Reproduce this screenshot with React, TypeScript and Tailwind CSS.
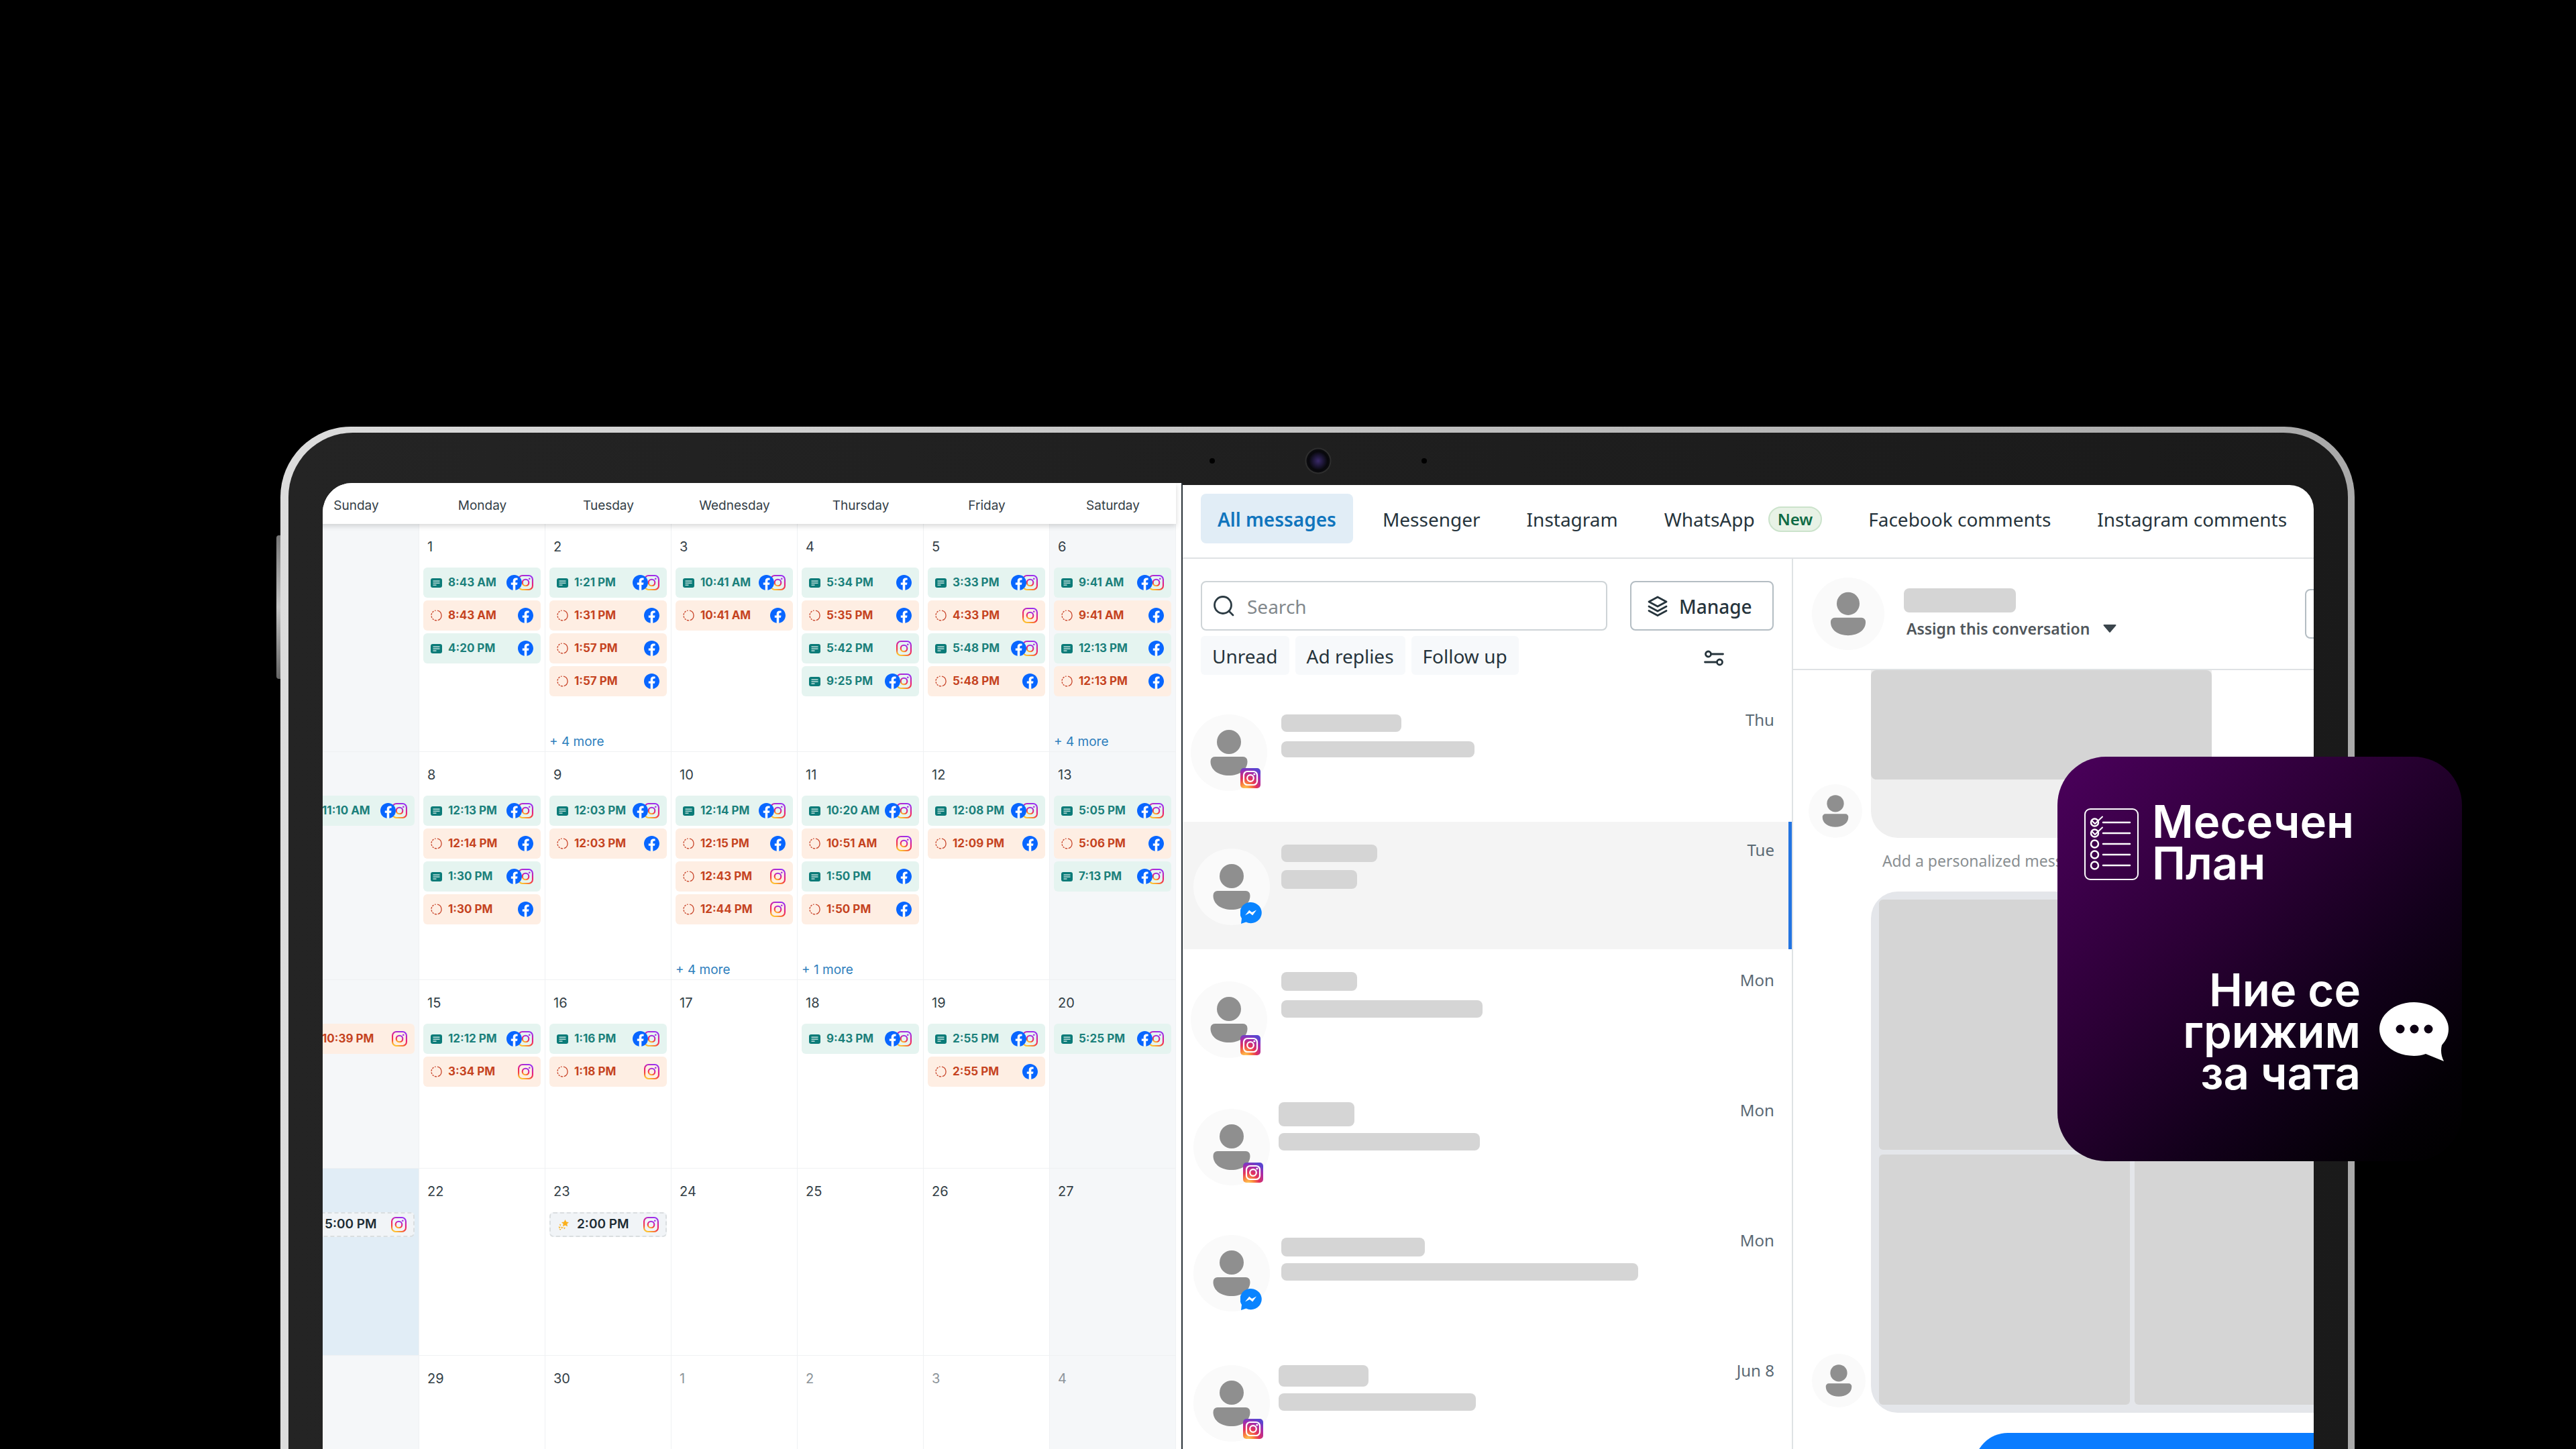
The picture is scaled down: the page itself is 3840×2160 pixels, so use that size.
import clsx from "clsx";

type Post = {
  time: string;
  kind: "published" | "failed" | "suggested";
  fb?: boolean;
  ig?: boolean;
};

type Day = {
  label: string;
  posts?: Post[];
  more?: number;
  muted?: boolean;
  today?: boolean;
};

// Short helpers so the month below stays readable
const ok = (time: string, on: string): Post => ({
  time,
  kind: "published",
  fb: on.includes("f"),
  ig: on.includes("i"),
});
const bad = (time: string, on: string): Post => ({ ...ok(time, on), kind: "failed" });
const tip = (time: string): Post => ({ time, kind: "suggested", ig: true });

const weekdays = ["Sunday", "Monday", "Tuesday", "Wednesday", "Thursday", "Friday", "Saturday"];

const weeks: { height: string; days: Day[] }[] = [
  {
    height: "h-[339px]",
    days: [
      { label: "" },
      { label: "1", posts: [ok("8:43 AM", "fi"), bad("8:43 AM", "f"), ok("4:20 PM", "f")] },
      {
        label: "2",
        posts: [ok("1:21 PM", "fi"), bad("1:31 PM", "f"), bad("1:57 PM", "f"), bad("1:57 PM", "f")],
        more: 4,
      },
      { label: "3", posts: [ok("10:41 AM", "fi"), bad("10:41 AM", "f")] },
      {
        label: "4",
        posts: [ok("5:34 PM", "f"), bad("5:35 PM", "f"), ok("5:42 PM", "i"), ok("9:25 PM", "fi")],
      },
      {
        label: "5",
        posts: [ok("3:33 PM", "fi"), bad("4:33 PM", "i"), ok("5:48 PM", "fi"), bad("5:48 PM", "f")],
      },
      {
        label: "6",
        posts: [ok("9:41 AM", "fi"), bad("9:41 AM", "f"), ok("12:13 PM", "f"), bad("12:13 PM", "f")],
        more: 4,
      },
    ],
  },
  {
    height: "h-[339px]",
    days: [
      { label: "", posts: [ok("11:10 AM", "fi")] },
      {
        label: "8",
        posts: [ok("12:13 PM", "fi"), bad("12:14 PM", "f"), ok("1:30 PM", "fi"), bad("1:30 PM", "f")],
      },
      { label: "9", posts: [ok("12:03 PM", "fi"), bad("12:03 PM", "f")] },
      {
        label: "10",
        posts: [ok("12:14 PM", "fi"), bad("12:15 PM", "f"), bad("12:43 PM", "i"), bad("12:44 PM", "i")],
        more: 4,
      },
      {
        label: "11",
        posts: [ok("10:20 AM", "fi"), bad("10:51 AM", "i"), ok("1:50 PM", "f"), bad("1:50 PM", "f")],
        more: 1,
      },
      { label: "12", posts: [ok("12:08 PM", "fi"), bad("12:09 PM", "f")] },
      { label: "13", posts: [ok("5:05 PM", "fi"), bad("5:06 PM", "f"), ok("7:13 PM", "fi")] },
    ],
  },
  {
    height: "h-[280px]",
    days: [
      { label: "", posts: [bad("10:39 PM", "i")] },
      { label: "15", posts: [ok("12:12 PM", "fi"), bad("3:34 PM", "i")] },
      { label: "16", posts: [ok("1:16 PM", "fi"), bad("1:18 PM", "i")] },
      { label: "17" },
      { label: "18", posts: [ok("9:43 PM", "fi")] },
      { label: "19", posts: [ok("2:55 PM", "fi"), bad("2:55 PM", "f")] },
      { label: "20", posts: [ok("5:25 PM", "fi")] },
    ],
  },
  {
    height: "h-[278px]",
    days: [
      { label: "", posts: [tip("5:00 PM")], today: true },
      { label: "22" },
      { label: "23", posts: [tip("2:00 PM")] },
      { label: "24" },
      { label: "25" },
      { label: "26" },
      { label: "27" },
    ],
  },
  {
    height: "h-[278px]",
    days: [
      { label: "" },
      { label: "29" },
      { label: "30" },
      { label: "1", muted: true },
      { label: "2", muted: true },
      { label: "3", muted: true },
      { label: "4", muted: true },
    ],
  },
];

const conversations = [
  { date: "Thu", from: "ig", avatar: "mt-[34px] ml-3", bars: "pt-[34px] gap-3.5", name: "h-[26px] w-[179px]", text: "h-6 w-72" },
  { date: "Tue", from: "ms", avatar: "mt-10 ml-4", bars: "pt-[34px] gap-3", name: "h-[26px] w-[143px]", text: "h-7 w-[113px]", active: true },
  { date: "Mon", from: "ig", avatar: "mt-11 ml-3", bars: "pt-[30px] gap-3.5", name: "h-7 w-[113px]", text: "h-[26px] w-[300px]" },
  { date: "Mon", from: "ig", avatar: "mt-10 ml-4", bars: "-ml-1 pt-[30px] gap-2.5", name: "h-9 w-[113px]", text: "h-[26px] w-[300px]" },
  { date: "Mon", from: "ms", avatar: "mt-[34px] ml-4", bars: "pt-[38px] gap-2.5", name: "h-7 w-[214px]", text: "h-[26px] w-[532px]" },
  { date: "Jun 8", from: "ig", avatar: "mt-[34px] ml-4", bars: "-ml-1 pt-[34px] gap-2.5", name: "h-8 w-[134px]", text: "h-[26px] w-[294px]" },
];

/* ---------- Icons ---------- */

const Gradients = () => (
  <svg width="0" height="0" className="absolute" aria-hidden="true">
    <defs>
      <linearGradient id="ig-line" x1="0.7" y1="0" x2="0.3" y2="1">
        <stop offset="0" stopColor="#9a2ff0" />
        <stop offset="0.45" stopColor="#e8207c" />
        <stop offset="0.75" stopColor="#f4453a" />
        <stop offset="1" stopColor="#fdc02f" />
      </linearGradient>
      <radialGradient id="ig-fill" cx="0.25" cy="1.05" r="1.1">
        <stop offset="0" stopColor="#ffd35c" />
        <stop offset="0.25" stopColor="#fb8a3c" />
        <stop offset="0.5" stopColor="#e4325a" />
        <stop offset="0.8" stopColor="#a32cae" />
        <stop offset="1" stopColor="#5b45d0" />
      </radialGradient>
      <radialGradient id="lens">
        <stop offset="0" stopColor="#3a2a6a" />
        <stop offset="0.45" stopColor="#1b1533" />
        <stop offset="0.75" stopColor="#08080c" />
        <stop offset="1" stopColor="#0d0d10" />
      </radialGradient>
    </defs>
  </svg>
);

const FacebookIcon = () => (
  <svg viewBox="8 8 496 496" className="relative z-10 size-[23px]">
    <circle cx="256" cy="256" r="235" fill="#fff" />
    <path
      fill="#0866ff"
      d="M504 256C504 119 393 8 256 8S8 119 8 256c0 123.78 90.69 226.38 209.25 245V327.69h-63V256h63v-54.64c0-62.15 37-96.48 93.67-96.48 27.14 0 55.52 4.84 55.52 4.84v61h-31.28c-30.8 0-40.41 19.12-40.41 38.73V256h68.78l-11 71.69h-57.78V501C413.31 482.38 504 379.78 504 256z"
    />
  </svg>
);

const InstagramIcon = () => (
  <svg viewBox="0 0 24 24" className="size-[23px]" fill="none" stroke="url(#ig-line)" strokeWidth="2.2">
    <rect x="1.1" y="1.1" width="21.8" height="21.8" rx="6" />
    <circle cx="12" cy="12" r="5" />
    <circle cx="18" cy="6" r="1.4" fill="#a72fe0" stroke="none" />
  </svg>
);

const PostIcon = () => (
  <svg viewBox="0 0 17 14" className="h-3.5 w-[17px]">
    <rect width="17" height="14" rx="3" fill="#0b7b78" />
    <path d="M3.5 4.2h10M3.5 7.2h10M3.5 10.2h5" stroke="#e5f4f0" strokeWidth="1.3" />
  </svg>
);

const FailedIcon = () => (
  <svg viewBox="0 0 17 17" className="size-[17px]" fill="none" stroke="#c8452a" strokeWidth="1.3">
    <path d="M10 1.1a7.5 7.5 0 0 1 .8 14.5M9.2 15.9a7.5 7.5 0 0 1-3.4-.5M4.6 14.8a7.5 7.5 0 0 1-1.9-1.7M2 12a7.5 7.5 0 0 1-.9-2.7M1 7.8a7.5 7.5 0 0 1 .8-2.7M2.5 4a7.5 7.5 0 0 1 2-1.9M6 1.4a7.5 7.5 0 0 1 1.6-.3" />
  </svg>
);

const StarIcon = () => (
  <svg viewBox="0 0 16 16" className="size-4" fill="#fbb01b">
    <path d="M10.5 0l1.8 3.4 3.7.5-2.7 2.6.7 3.8-3.5-1.8L7 10.3l.7-3.8L5 3.9l3.7-.5z" />
    <path d="M2 6.5l2.5 1.2-1.5 2zM.5 10.5l3.5.5-2.3 2zM4.5 10.5l3 1.2-2.3 2zM8 11.5l3 .8-2 2.2zM1.5 13.5l3 .7-1.5 1.8z" />
  </svg>
);

const ChannelBadge = ({ from }: { from: string }) =>
  from === "ig" ? (
    <svg viewBox="0 0 30 30" className="absolute right-2.5 bottom-1 size-[30px]">
      <rect width="30" height="30" rx="5" fill="url(#ig-fill)" />
      <g fill="none" stroke="#fff" strokeWidth="2.2">
        <rect x="5" y="5" width="20" height="20" rx="5.5" />
        <circle cx="15" cy="15" r="4.8" />
      </g>
      <circle cx="20.8" cy="9.2" r="1.4" fill="#fff" />
    </svg>
  ) : (
    <svg viewBox="0 0 32 32" className="absolute right-3 bottom-0.5 size-8">
      <path fill="#0a84ff" d="M16 0a16 15.6 0 1 1-7.5 29.5L1 32l1-8A15.6 15.6 0 0 1 16 0z" />
      <path fill="#fff" d="M7 19.5l6.2-7.8 4 3.2 6.8-3.4-5.8 8-4.4-3.4z" />
    </svg>
  );

const Person = ({ size }: { size: string }) => (
  <svg viewBox="0 0 114 114" className={clsx("block shrink-0", size)}>
    <circle cx="57" cy="57" r="57" fill="#fafafa" />
    <g fill="#8f8f8f">
      <circle cx="57" cy="41" r="18" />
      <path d="M36 63h42a6.5 6.5 0 0 1 6.5 7c0 13-12 21-27.5 21S29.5 83 29.5 70a6.5 6.5 0 0 1 6.5-7z" />
    </g>
  </svg>
);

/* ---------- Planner ---------- */

const PostChip = ({ post }: { post: Post }) => (
  <button
    className={clsx(
      "flex w-full items-center rounded-md pl-[11px] whitespace-nowrap",
      post.kind === "published" && "h-[45px] bg-[#e5f4f0] pr-[11px] text-[17px] font-bold text-[#1b807b]",
      post.kind === "failed" && "h-[45px] bg-[#feeee3] pr-[11px] text-[17px] font-bold text-[#c5431f]",
      post.kind === "suggested" &&
        "h-[37px] border-2 border-dashed border-[#dadee0] bg-[#f1f4f7] pr-2.5 text-[19px] font-semibold text-[#1c2b33]"
    )}
  >
    {post.kind === "published" && <PostIcon />}
    {post.kind === "failed" && <FailedIcon />}
    {post.kind === "suggested" && <StarIcon />}
    <span className={post.kind === "suggested" ? "ml-3" : "ml-[9px]"}>{post.time}</span>
    <span className="ml-auto flex">
      {post.fb && <FacebookIcon />}
      {post.ig && (
        <span className={clsx(post.fb && "-ml-1.5")}>
          <InstagramIcon />
        </span>
      )}
    </span>
  </button>
);

const DayCell = ({ day, height }: { day: Day; height: string }) => (
  <div className={clsx("flex flex-col px-1.5", height)}>
    <p className={clsx("mt-5 h-7 pl-1.5 text-[20px] leading-7", day.muted ? "text-[#8d9499]" : "text-[#344047]")}>
      {day.label}
    </p>
    <div className="mt-[17px] flex flex-col gap-1">
      {day.posts?.map((post, i) => (
        <PostChip key={i} post={post} />
      ))}
    </div>
    {day.more && (
      <button className="mt-auto self-start pb-0.5 text-[19px] leading-6 text-[#2f7fbd]">+ {day.more} more</button>
    )}
  </div>
);

const Planner = () => (
  <section className="min-w-0 flex-[1280_1_0%] overflow-hidden rounded-tl-[44px] bg-white font-[Inter,sans-serif]">
    {/* The first column is cut by the edge of the screen */}
    <div className="mr-2 -ml-11">
      <table className="w-full table-fixed border-separate border-spacing-0">
        <thead className="relative z-10 bg-white shadow-[0_3px_8px_rgba(0,0,0,0.16)]">
          <tr>
            {weekdays.map((name) => (
              <th key={name} scope="col" className="h-[61px] pt-2 text-center text-[19px] font-normal text-[#344047]">
                {name}
              </th>
            ))}
          </tr>
        </thead>
        <tbody>
          {weeks.map((week, w) => (
            <tr key={w}>
              {week.days.map((day, d) => (
                <td
                  key={d}
                  className={clsx(
                    "border-r border-b border-[#eff1f3] p-0 align-top",
                    day.today ? "bg-[#e1edf6]" : (d === 0 || d === 6) && "bg-[#f5f7f9]"
                  )}
                >
                  <DayCell day={day} height={week.height} />
                </td>
              ))}
            </tr>
          ))}
        </tbody>
      </table>
    </div>
  </section>
);

/* ---------- Inbox ---------- */

const tabClass = "flex h-[74px] items-center rounded-lg px-[25px] pt-0.5 whitespace-nowrap";

const Tabs = () => (
  <nav className="flex h-[110px] shrink-0 items-start gap-[19px] border-b-2 border-[#dfe2e4] px-[27px] pt-[13px] text-[28px] text-[#26343c]">
    <button className={clsx(tabClass, "bg-[#e1edf6] font-semibold text-[#1075bd]")}>All messages</button>
    <button className={tabClass}>Messenger</button>
    <button className={tabClass}>Instagram</button>
    <button className={tabClass}>
      WhatsApp
      <span className="ml-5 flex h-[38px] items-center rounded-full border-2 border-[#cbe3cb] bg-[#e8f2e6] px-3 text-[24px] font-semibold text-[#0f6b45]">
        New
      </span>
    </button>
    <button className={tabClass}>Facebook comments</button>
    <button className={tabClass}>Instagram comments</button>
  </nav>
);

const Conversations = () => (
  <div className="flex min-w-0 flex-[909_1_0%] flex-col border-r-2 border-[#dfe2e4] pt-[33px]">
    <div className="flex gap-[34px] px-[27px]">
      <div className="flex h-[74px] min-w-0 flex-1 items-center rounded-lg border-2 border-[#ced4d7] pl-4">
        <svg viewBox="0 0 32 32" className="size-8 shrink-0" fill="none" stroke="#2c3b43" strokeWidth="2.8" strokeLinecap="round">
          <circle cx="15" cy="15" r="12.5" />
          <path d="M24 24l6 6" />
        </svg>
        <input
          type="search"
          aria-label="Search conversations"
          placeholder="Search"
          className="ml-[19px] min-w-0 flex-1 pt-0.5 text-[28px] outline-none placeholder:text-[#82888c]"
        />
      </div>
      <button className="flex h-[74px] w-[214px] items-center rounded-lg border-2 border-[#b4bdc3] pt-0.5 pl-[23px] text-[28px] font-medium text-[#26343c]">
        <svg viewBox="0 0 32 32" className="mr-4 size-8" fill="none" stroke="#26343c" strokeWidth="2.8" strokeLinejoin="round" strokeLinecap="round">
          <path d="M16 2l13 7-13 7L3 9zM3 16l13 7 13-7M3 22.5l13 7 13-7" />
        </svg>
        Manage
      </button>
    </div>

    <div className="mt-2 flex items-center gap-[9px] px-[27px] text-[28px] text-[#26343c]">
      {["Unread", "Ad replies", "Follow up"].map((filter) => (
        <button key={filter} className="h-[58px] rounded-md bg-[#f7f9fb] px-[17px] pt-0.5 whitespace-nowrap">
          {filter}
        </button>
      ))}
      <button aria-label="Filters" className="mr-[74px] ml-auto pt-2">
        <svg viewBox="0 0 30 24" className="h-6 w-[30px]" fill="none" stroke="#26343c" strokeWidth="2.8" strokeLinecap="round">
          <circle cx="6.5" cy="6" r="4" />
          <path d="M11 6h17.5M1.5 18H19" />
          <circle cx="23.5" cy="18" r="4" />
        </svg>
      </button>
    </div>

    <ul className="mt-[25px] flex flex-col gap-1">
      {conversations.map((c, i) => (
        <li
          key={i}
          className={clsx(
            "flex h-[190px] shrink-0 border-r-[5px] pr-[21px]",
            c.active ? "border-[#2374e1] bg-[#f4f4f4]" : "border-transparent"
          )}
        >
          <div className="w-[147px] shrink-0">
            <div className={clsx("relative size-[114px]", c.avatar)}>
              <Person size="size-[114px]" />
              <ChannelBadge from={c.from} />
            </div>
          </div>
          <div className={clsx("flex flex-col", c.bars)}>
            <span className={clsx("rounded-lg bg-[#d5d5d5]", c.name)} />
            <span className={clsx("rounded-lg bg-[#d5d5d5]", c.text)} />
          </div>
          <time className="mt-[26px] ml-auto text-[24px] leading-8 text-[#5a6973]">{c.date}</time>
        </li>
      ))}
    </ul>
  </div>
);

const Thread = () => (
  <div className="flex min-w-0 flex-[777_1_0%] flex-col overflow-hidden">
    <header className="flex h-[166px] shrink-0 items-center border-b-2 border-[#dfe2e4] pl-7">
      <Person size="size-[108px]" />
      <div className="ml-[29px] flex flex-col gap-2">
        <span className="h-9 w-[167px] rounded-lg bg-[#d5d5d5]" />
        <button className="ml-1 flex items-center gap-5 text-[23px] leading-8 font-semibold whitespace-nowrap text-[#50565b]">
          Assign this conversation
          <svg viewBox="0 0 20 12" className="h-3 w-5" fill="#3b454c">
            <path d="M1.5 0h17a1 1 0 0 1 .8 1.6L11 11.3a1.3 1.3 0 0 1-2 0L.7 1.6A1 1 0 0 1 1.5 0z" />
          </svg>
        </button>
      </div>
      <button aria-label="More" className="-mr-[201px] ml-auto h-[74px] w-[214px] shrink-0 rounded-lg border-2 border-[#b4bdc3]" />
    </header>

    <div className="flex items-end">
      <div className="w-[116px] shrink-0 pl-[23px]">
        <Person size="size-20" />
      </div>
      <div className="h-[250px] w-[508px] overflow-hidden rounded-b-[40px] bg-[#efefef]">
        <div className="h-[163px] rounded-lg bg-[#d5d5d5]" />
      </div>
    </div>

    <p className="h-20 shrink-0 pl-[133px] text-[23px] leading-[68px] whitespace-nowrap text-[#8a8f92]">
      Add a personalized message
    </p>

    <div className="flex items-end">
      <div className="w-[116px] shrink-0 pb-2 pl-7">
        <Person size="size-20" />
      </div>
      <div className="grid shrink-0 grid-cols-[374px_374px] grid-rows-[373px_373px] gap-[7px] overflow-hidden rounded-[40px] bg-[#e4e6ea] p-3">
        <div className="rounded-md bg-[#d5d5d5]" />
        <div className="rounded-md bg-[#d5d5d5]" />
        <div className="rounded-md bg-[#d5d5d5]" />
        <div className="rounded-md bg-[#d5d5d5]" />
      </div>
    </div>

    <div className="mt-[30px] ml-[270px] h-40 shrink-0 rounded-tl-[50px] bg-[#0a7cff]" />
  </div>
);

const Inbox = () => (
  <section className="mt-[3px] flex min-w-0 flex-[1686_1_0%] flex-col overflow-hidden rounded-tr-[36px] bg-white font-['Noto_Sans',sans-serif]">
    <Tabs />
    <div className="flex min-h-0 flex-1">
      <Conversations />
      <Thread />
    </div>
  </section>
);

/* ---------- Plan card ---------- */

const PlanCard = () => (
  <aside className="absolute top-[1128px] right-[170px] flex h-[603px] w-[603px] flex-col justify-between rounded-[72px] bg-[linear-gradient(135deg,#4b005c_0%,#2c0036_38%,#12001a_66%,#030005_88%,#000_100%)] pt-[66px] pr-5 pb-[100px] pl-10 font-[Inter,sans-serif] text-[67px] leading-[62px] font-semibold text-white">
    <div className="flex items-start gap-5">
      <svg viewBox="0 0 81 107" className="mt-[11px] h-[107px] w-[81px]" fill="none" stroke="#fff" strokeLinecap="round">
        <rect x="1" y="1" width="79" height="105" rx="8" strokeWidth="2" />
        <g strokeWidth="2.5">
          {[21, 37, 53, 69, 85].map((y) => (
            <g key={y}>
              <circle cx="15.5" cy={y} r="5.5" />
              <path d={`M28 ${y}h40`} />
            </g>
          ))}
          <path d="M12 19l4 4L27 12.5M12 35l4 4L27 28.5" strokeWidth="2" />
        </g>
      </svg>
      <p className="whitespace-pre-line">{"Месечен\nПлан"}</p>
    </div>
    <div className="flex items-center justify-end gap-7">
      <p className="text-right whitespace-pre-line">{"Ние се\nгрижим\nза чата"}</p>
      <svg viewBox="0 0 103 88" className="h-[88px] w-[103px]">
        <path
          fill="#fff"
          d="M51.5 0C80 0 103 18 103 40c0 10-4 17-10 24-2 8-1 16 3 24L69 77c-5 2-11 3-17.5 3C23 80 0 62 0 40S23 0 51.5 0z"
        />
        <g fill="#0d0012">
          <circle cx="31" cy="40" r="6.5" />
          <circle cx="52" cy="40" r="6.5" />
          <circle cx="73" cy="40" r="6.5" />
        </g>
      </svg>
    </div>
  </aside>
);

const App = () => {
  return (
    <main className="relative h-screen overflow-hidden bg-black pt-[636px] pr-[330px] pl-[418px]">
      <Gradients />

      {/* Tablet */}
      <div className="relative h-full rounded-t-[105px] bg-linear-to-r from-[#dcdcdc] to-[#a9a9a9] pt-[9px] pr-2.5 pl-3">
        <div className="absolute top-[162px] -left-1.5 h-[214px] w-1.5 rounded-l-sm bg-linear-to-b from-[#777] via-[#c4c4c4] to-[#666]" />
        <div className="flex h-full flex-col rounded-t-[96px] bg-linear-to-r from-[#242424] to-[#1a1a1a] px-[51px]">
          <div className="flex h-[75px] shrink-0 items-center justify-center gap-[134px] pt-2">
            <span className="size-2 rounded-full bg-black" />
            <svg viewBox="0 0 40 40" className="size-10">
              <circle cx="20" cy="20" r="18.5" fill="url(#lens)" stroke="#2e2e2e" strokeWidth="2" />
            </svg>
            <span className="size-2 rounded-full bg-black" />
          </div>
          <div className="flex min-h-0 flex-1">
            <Planner />
            <div className="w-0.5 shrink-0 bg-[#2a3238]" />
            <Inbox />
          </div>
        </div>
      </div>

      <PlanCard />
    </main>
  );
};

export default App;
